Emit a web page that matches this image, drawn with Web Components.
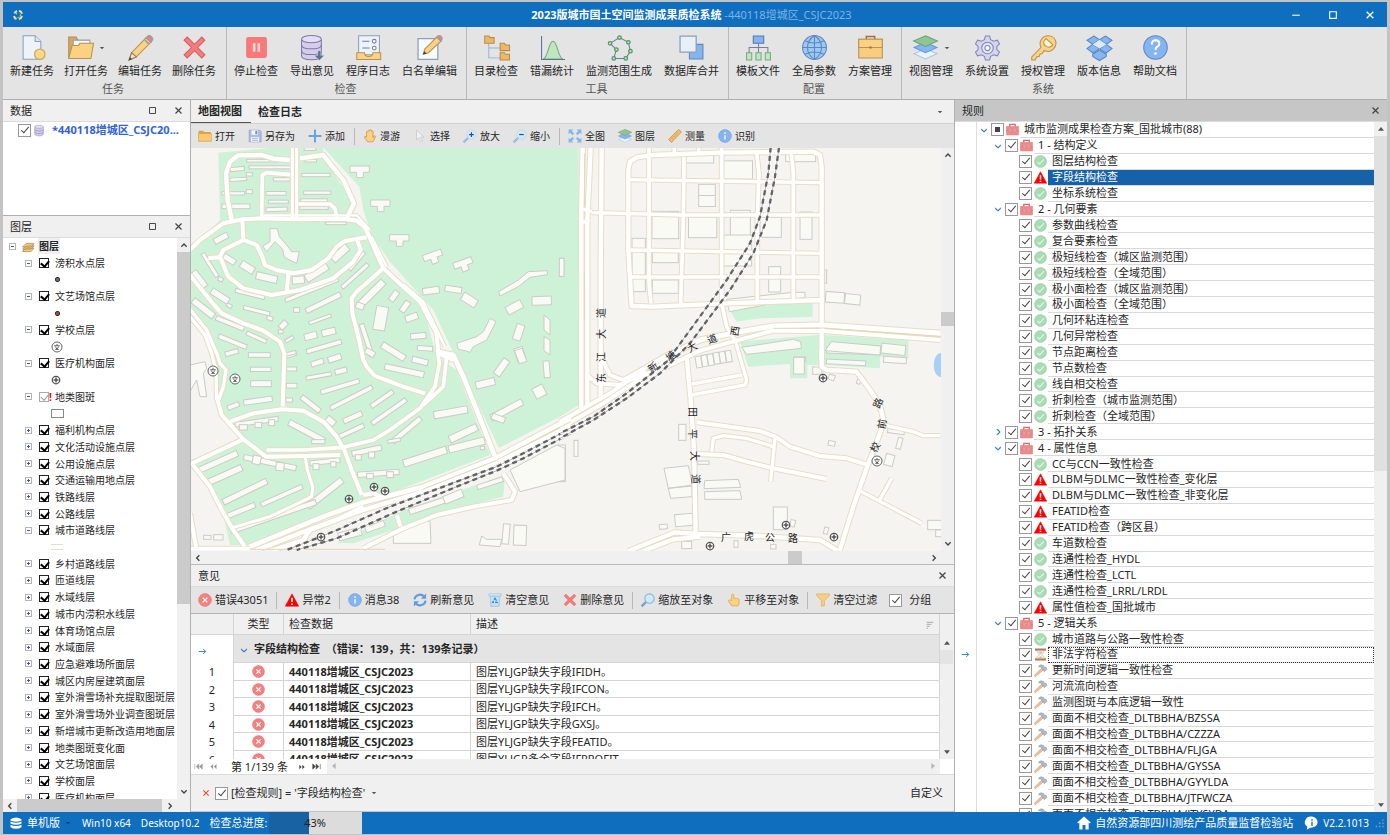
<!DOCTYPE html>
<html lang="zh-CN">
<head>
<meta charset="utf-8">
<title>2023版城市国土空间监测成果质检系统</title>
<style>
html,body{height:100%}
body{margin:0;box-sizing:border-box;padding:2px 3px 1px;background:#c3c3c3;overflow:hidden;
font:11px/16px "Noto Sans","Noto Sans CJK SC",sans-serif;color:#262626}
</style>
</head>
<body>
<app-window></app-window>
<script>
const ICONS={
logo:`<g fill="none" stroke="#f3e08a" stroke-width="4"><path d="M5 9a8 8 0 0 1 5-5M14 3.500a8.500 8.500 0 0 1 6 6M20 14a8 8 0 0 1-6 6M9 20a8 8 0 0 1-5-6"/></g><path d="M7 7l4 1-2 4zM16 9l3 4-4 3zM10 17l3-2 1 4z" fill="#8fd0a0"/>`,
newdoc:`<path d="M3 .7h11.500l5.500 5.500v17H3z" fill="#edf3f8" stroke="#8ba0ba"/><path d="M14.500.7v5.500H20" fill="#dbe6ef" stroke="#8ba0ba"/><circle cx="19" cy="18.500" r="5" fill="#fbd98a" stroke="#d0a95c" stroke-width="1.300"/>`,
folder:`<path d="M.7 22V2h7l2 3h11v4" fill="#d6a860" stroke="#b28c4e"/><path d="M5 5h16v6H5z" fill="#f5f9fc" stroke="#8ba0ba"/><path d="M.7 22.500L4 10h6l1.500-2H24.500L22 22.500z" fill="#fbd183" stroke="#b8924f"/>`,
pencil:`<path d="M1 24l2.500-7L17.500 2.500l4.500 4.500L8 21z" fill="#fbd183" stroke="#b8924f"/><path d="M17.500 2.500L19 1q1.500-1.500 3.500.5t1 3.500L22 7z" fill="#f47c7c" stroke="#8ba0ba"/><path d="M16 4.500l4 4" stroke="#8ba0ba" stroke-width="1.500"/><path d="M1 24l2.500-7 4.500 4z" fill="#f7e3c2" stroke="#8d7a5a"/><path d="M.8 24.200l1-3 2 2z" fill="#444"/>`,
cross:`<path d="M2 5l3-3 7 7 7-7 3 3-7 7 7 7-3 3-7-7-7 7-3-3 7-7z" fill="#f47c7c" stroke="#d75f5f"/>`,
pause:`<rect x="2" y="2" width="20" height="20" rx="2" fill="#f97878"/><path d="M8.500 8h2.500v8H8.500zM13 8h2.500v8H13z" fill="#ffd9d9"/>`,
dbdown:`<path d="M1.500 4v16c0 5 19 5 19 0V4" fill="#d6cdec" stroke="#7d7aa4"/><ellipse cx="11" cy="4" rx="9.500" ry="3.500" fill="#e4def4" stroke="#7d7aa4"/><path d="M1.500 9.500c0 5 19 5 19 0M1.500 15c0 5 19 5 19 0" fill="none" stroke="#7d7aa4"/><path d="M17 15h3v4.500h3.500l-5 5-5-5H17z" fill="#5b7396" stroke="#e3e3e3" stroke-width=".5"/>`,
db:`<path d="M1.500 4v16c0 5 19 5 19 0V4" fill="#d6cdec" stroke="#8d8ab4"/><ellipse cx="11" cy="4" rx="9.500" ry="3.500" fill="#e4def4" stroke="#8d8ab4"/><path d="M1.500 9.500c0 5 19 5 19 0M1.500 15c0 5 19 5 19 0" fill="none" stroke="#8d8ab4" stroke-width="1.500"/>`,
log:`<path d="M2.500.7h20V19h-20z" fill="#edf3f8" stroke="#8ba0ba"/><path d="M6 6h7M6 12.500h7" stroke="#6a80b0"/><circle cx="17.500" cy="6" r="1.800" fill="#fff" stroke="#7d7aa4"/><circle cx="17.500" cy="12.500" r="1.800" fill="#fff" stroke="#7d7aa4"/><path d="M.7 17h7.500q0 3.500 4 3.500t4-3.500h7.500v6.500H.7z" fill="#fbd183" stroke="#b8924f"/>`,
listedit:`<path d="M1 3.500h19v20H1z" fill="#f8fbfd" stroke="#8ba0ba" stroke-width="1.200"/><path d="M6 18.500l1.500-5L19 2l4 4-12 11z" fill="#fbd183" stroke="#b8924f"/><path d="M19 2l1.200-1.200q1.500-1 3 .5t.8 3L23 6z" fill="#f47c7c" stroke="#8ba0ba"/><path d="M5.800 18.800l1-3.300 2.500 2.300z" fill="#444"/>`,
tree:`<path d="M4.500 8v14h13M4.500 12.500h13" fill="none" stroke="#a9c3dd" stroke-width="1.300"/><g fill="#f0b866" stroke="#b28c4e"><path d="M.7 8V1h4l1 1.500h4V8z"/><path d="M15.500 15V8h4l1 1.500h4V15z"/><path d="M15.500 24v-7h4l1 1.500h4V24z"/></g>`,
curve:`<path d="M3 23c5-1 5-17 9.500-17s4.500 16 9.500 17z" fill="#bfe6bf" stroke="#74ac7c"/><path d="M1.500 1v22.500H24" fill="none" stroke="#5d7296"/>`,
poly:`<path d="M3 8l9-5.500 8.500 4.500 2 8.500-4.500 7H6.500L9 14z" fill="none" stroke="#6a7a9a"/><g fill="#bfe6bf" stroke="#4c9a62" stroke-width="1.200"><circle cx="3" cy="8" r="1.700"/><circle cx="12" cy="2.500" r="1.700"/><circle cx="20.500" cy="7" r="1.700"/><circle cx="22.500" cy="15.500" r="1.700"/><circle cx="18" cy="22.500" r="1.700"/><circle cx="6.500" cy="22.500" r="1.700"/><circle cx="9" cy="14" r="1.700"/></g>`,
merge:`<path d="M10 9h13v14H10z" fill="#86b4ee" stroke="#5d87bd"/><path d="M1 1h15.500v15.500H1z" fill="#e7f0f8" stroke="#8ba0ba" stroke-width="1.200"/>`,
org:`<path d="M12 8v4M3 17v-5h18v5M12 12v5" fill="none" stroke="#7d7aa4"/><path d="M7 1h10v7H7z" fill="#86b4ee" stroke="#4c7ab8"/><g fill="#bfe6bf" stroke="#74ac7c"><path d="M.5 17h5v7h-5zM9.500 17h5v7h-5zM18.500 17h5v7h-5z"/></g>`,
globe:`<circle cx="12" cy="12" r="11.500" fill="#9cc8f6" stroke="#5d87bd"/><path d="M12 .5v23M.5 12h23M3 5.500c5 3 13 3 18 0M3 18.500c5-3 13-3 18 0M12 .5c-9 6-9 17 0 23M12 .5c9 6 9 17 0 23" fill="none" stroke="#5d87bd"/>`,
brief:`<path d="M8 4V1.500h8V4" fill="none" stroke="#9b6f4a" stroke-width="1.500"/><path d="M.7 4h22.600v18H.7z" fill="#f9cd80" stroke="#b8924f"/><path d="M.7 4h22.600v8H.7z" fill="#fbd183" stroke="#b8924f"/><path d="M11 11h2v2h-2z" fill="#9b6f4a"/>`,
layers:`<path d="M12 13l11 5-11 5-11-5z" fill="#e9f3fb" stroke="#a9c6e4"/><path d="M12 7l11 5-11 5-11-5z" fill="#84b6f2" stroke="#6698d6"/><path d="M12 .7l11.500 5L12 11 .5 5.700z" fill="#8fc493" stroke="#6fa375"/>`,
gear:`<path d="M10 1h4l1 3.500 3 1.500 3.500-1 2 3.500-2.500 2.500v3l2.500 2.500-2 3.500-3.500-1-3 1.500-1 3.500h-4l-1-3.500-3-1.500-3.500 1-2-3.500L3 14v-3L.5 8.500l2-3.500L6 6l3-1.500z" fill="#d9d2ee" stroke="#7d86b4"/><circle cx="12" cy="12.500" r="5.500" fill="#e8e6f4" stroke="#7d86b4"/><circle cx="12" cy="12.500" r="2.500" fill="#fff" stroke="#7d86b4"/>`,
key:`<path d="M.7 24v-3L9.500 12C7 6 11 .7 16.500.7s7.500 4 7.500 7.500-4 8-8.500 7.500L12.500 15l-2 3-2 .5-.5 2-2.500.5L4 24z" fill="#fbd183" stroke="#b8924f"/><path d="M14.500 3.500l6.500 6q-3 4-7 1t.5-7z" fill="#fff3d8" stroke="#b8924f"/>`,
box:`<g fill="#84b6f2" stroke="#5d87bd"><path d="M6.500 1l5.500 3.500L5.500 9 0 5z"/><path d="M17.500 1L24 5l-5.500 4L12 4.500z"/><path d="M5.500 9l6.500 4-6 4.500L0 13z"/><path d="M18.500 9l5.500 4-6 4.500-6-4.500z"/><path d="M5.500 18.500l6.500-4 6.500 4v2L12 24.500l-6.500-4z"/></g><path d="M12 4.500L18.500 9 12 13 5.500 9z" fill="#dceafa"/>`,
help:`<circle cx="12" cy="12" r="11.300" fill="#84b4f2" stroke="#5d87bd"/><path d="M8.500 9q0-4 3.700-4 3.500.2 3.500 3.300 0 2-2.200 3.200-1.500.8-1.500 3" fill="none" stroke="#fff" stroke-width="1.900"/><circle cx="12" cy="17.800" r="1.300" fill="#fff"/>`,
sfolder:`<path d="M1 3h8l1 2h12v16H1z" fill="#d8a14c"/><path d="M1 8h22v13H1z" fill="#fbca6f" stroke="#d8a14c"/>`,
save:`<path d="M2 2h18l2.500 2.500V22H2z" fill="#aebfe0" stroke="#8095c0"/><path d="M6 2h11v8H6zM5 14h14v8H5z" fill="#eef5fb"/><path d="M13 3.500h2.500v5H13zM7 16.500h10M7 19.500h10" fill="#8095c0" stroke="#8095c0"/>`,
plus:`<path d="M12 1v22M1 12h22" stroke="#6ba3dc" stroke-width="3.400"/>`,
hand:`<path d="M6 14V5q1-2 2.500 0V3q1-2 2.700 0V2q1.500-2 3 0v2q1.500-2 3 0v11l2-3q2-1 2.500 1L17 22H8L2 14q1-2.500 4 0z" fill="#fbd183" stroke="#c8923f" stroke-width="1.300"/>`,
hand1:`<path d="M8 13V3q1.800-3 3.700 0v6q4-.5 9 1.500v7L19 22H8L2 13q2-2.500 6 0z" fill="#fbd183" stroke="#dba551" stroke-width="1.300"/>`,
cursor:`<path d="M6 2v17l4-4 3.500 7 3-1.500L13 14h6z" fill="#f1f1f4" stroke="#c3c3cc" stroke-width="1.200"/>`,
zin:`<path d="M1 23l8-8" stroke="#9bbbe0" stroke-width="4"/><circle cx="14.500" cy="9.500" r="8" fill="#cfeafa" stroke="#b0d4ec"/><path d="M14.500 5.500v8M10.500 9.500h8" stroke="#2d4f80" stroke-width="2"/>`,
zout:`<path d="M1 23l8-8" stroke="#9bbbe0" stroke-width="4"/><circle cx="14.500" cy="9.500" r="8" fill="#cfeafa" stroke="#b0d4ec"/><path d="M10.500 9.500h8" stroke="#2d4f80" stroke-width="2"/>`,
lens:`<path d="M1 23l8-8" stroke="#7b9ccc" stroke-width="4"/><circle cx="14.500" cy="9.500" r="8" fill="#cfeafa" stroke="#87b4dc" stroke-width="1.800"/>`,
full:`<path d="M1 1h8L6.500 3.500l4 4-3 3-4-4L1 9zM23 1v8l-2.500-2.500-4 4-3-3 4-4L15 1zM1 23v-8l2.500 2.500 4-4 3 3-4 4L9 23zM23 23h-8l2.500-2.500-4-4 3-3 4 4L23 15z" fill="#86b4ee"/>`,
ruler:`<path d="M1 18L18 1l5 4L6 23z" fill="#f4bd68" stroke="#b8924f" stroke-width="1.300"/><path d="M6 15l2 2M9 12l2 2M12 9l2 2M15 6l2 2" stroke="#b8924f" stroke-width="1.300"/>`,
info:`<circle cx="12" cy="12" r="11" fill="#84b4f2" stroke="#6c9fdc"/><path d="M12 10.500V18M12 5.500v3" stroke="#fff" stroke-width="2.200"/>`,
err:`<circle cx="12" cy="12" r="11" fill="#f58080" stroke="#e77272"/><path d="M8 8l8 8M16 8l-8 8" stroke="#fff" stroke-width="2.200"/>`,
warn:`<path d="M12 1.500L23.500 22.500H.5z" fill="#fb0000" stroke="#fb0000" stroke-linejoin="round"/><path d="M12 8v7.500M12 17.800v2.600" stroke="#fff" stroke-width="2.800"/>`,
ok:`<circle cx="12" cy="12" r="11" fill="#a8dcb2" stroke="#8ecb9b"/><path d="M6.500 12.500l4 4 7.500-8.500" fill="none" stroke="#e6f8ea" stroke-width="2"/>`,
refresh:`<path d="M2.500 11A9.500 9.500 0 0 1 19 6M21.500 13A9.500 9.500 0 0 1 5 18" fill="none" stroke="#5f9be0" stroke-width="3.600"/><path d="M22.500 1v9h-9zM1.500 23v-9h9z" fill="#5f9be0"/>`,
bin:`<path d="M3.500 5h17l-1.500 18H5z" fill="#bfe0f6" stroke="#8fb8d8"/><path d="M1.500 1.500h21V5h-21z" fill="#dbeefb" stroke="#8fb8d8"/><path d="M12 9l4 7H8z" fill="none" stroke="#3f82cc" stroke-width="2" stroke-dasharray="5 2"/>`,
funnel:`<path d="M1 1.500h22v3L14.500 13v8.500l-5 1.500V13L1 4.500z" fill="#f9cd80" stroke="#d9a651"/>`,
kit:`<path d="M7 7V2.500h10V7" fill="none" stroke="#d96a6a" stroke-width="2.500"/><path d="M1 6.500h22V22H1z" fill="#f08a8a" stroke="#e07070"/><path d="M1 14h22" stroke="#e27878"/><path d="M6 11.500h4v4H6zM14 11.500h4v4h-4z" fill="#c9a9b5"/>`,
glass:`<path d="M2 1h20v4H2zM2 19h20v4H2z" fill="#b4784e"/><path d="M5 5h14q0 5-5 7 5 2 5 7H5q0-5 5-7-5-2-5-7z" fill="#e9eff4" stroke="#b0bcc8"/><path d="M8 7h8l-4 4zM7 19l5-4 5 4z" fill="#f0b866"/>`,
hammer:`<path d="M2.500 23.500l-2-2.500L14 8l3 3z" fill="#f3c096" stroke="#c98d60"/><path d="M8 4.500q4-4.500 9-2l3 4 2-.5 2 3.500-4.500 4.500-3-2.500v-2.500L13 6z" fill="#a9bacb" stroke="#8295a8"/>`,
stack:`<path d="M2 16L9 5h13l-4 13-2 3H2z" fill="#f6cf90"/><g fill="#fbdba4" stroke="#a87b34" stroke-width="1.300"><path d="M1 21l6-6h15l-5 6zM1 17l6-6h15l-5 6zM1 13l6-6h15l-5 6z"/></g>`,
school:`<circle cx="12" cy="12" r="10" fill="#fff" stroke="#555" stroke-width="1.800"/><path d="M6.500 9.500h11M12 6v3.500M8.500 11q3.500 8 7 6M15.500 11q-3.500 8-7 6" fill="none" stroke="#555" stroke-width="1.800"/>`,
med:`<circle cx="12" cy="12" r="9" fill="#fff" stroke="#555" stroke-width="3"/><path d="M12 6v12M6 12h12" stroke="#555" stroke-width="3.600"/>`,
dbw:`<path d="M1 4.500q11-7 22 0v2.500q-11 5-22 0zM1 9q11 5 22 0v4q-11 5-22 0zM1 15.500q11 5 22 0v5q-11 6-22 0z" fill="#fff"/>`,
home:`<path d="M12 1l11.500 10-1.500 1.800-2-1.600V23h-5.500v-7.500h-5V23H4V11.200l-2 1.600L.5 11z" fill="#fff"/>`,
bubble:`<path d="M12 1a11 9.500 0 1 1-3 19L3 23.500l1-5.500A10.500 9.500 0 0 1 12 1z" fill="#fff"/><path d="M12 10v6.500M12 5.500v2.500" stroke="#106ebe" stroke-width="2.400"/>`,
arrow:`<path d="M2 12h18M14 5.500l6.500 6.500-6.500 6.500" fill="none" stroke="#2273c4" stroke-width="2.400"/>`,
open:`<path d="M4 8l8 8 8-8v4l-8 7-8-7z" fill="#2273c4" stroke="#2273c4"/>`,
shut:`<path d="M8 4l8 8-8 8h4l7-8-7-8z" fill="#2273c4" stroke="#2273c4"/>`,
x:`<path d="M4 4l16 16M20 4L4 20" stroke="currentColor" stroke-width="3.200"/>`,
max:`<path d="M4 4h16v16H4z" fill="none" stroke="currentColor" stroke-width="2.600"/>`,
min:`<path d="M3 12.500h18" stroke="currentColor" stroke-width="2.600"/>`,
caret:`<path d="M3 8h18l-9 9z" fill="currentColor"/>`,
sort:`<path d="M2 4h20M2 10h14M2 16h9M2 22h4" stroke="#999" stroke-width="2.400"/>`,
cu:`<path d="M4 17l8-8 8 8" fill="none" stroke="#444" stroke-width="4"/>`,cd:`<path d="M4 7l8 8 8-8" fill="none" stroke="#444" stroke-width="4"/>`,
cl:`<path d="M16 4l-8 8 8 8" fill="none" stroke="#444" stroke-width="4"/>`,cr:`<path d="M8 4l8 8-8 8" fill="none" stroke="#444" stroke-width="4"/>`,
tu:`<path d="M3 17h18L12 6z" fill="#555"/>`,td:`<path d="M3 7h18l-9 11z" fill="#555"/>`,
tl:`<path d="M17 3v18L6 12z" fill="#b5b5b5"/>`,tr:`<path d="M7 3v18l11-9z" fill="#b5b5b5"/>`,
first:`<path d="M2 5v14M13 5l-7 7 7 7zM22 5l-7 7 7 7z" fill="#999" stroke="#999" stroke-width="1.500"/>`,
prev:`<path d="M11 5l-7 7 7 7zM20 5l-7 7 7 7z" fill="#999"/>`,
next:`<path d="M4 5l7 7-7 7zM13 5l7 7-7 7z" fill="#444"/>`,
last:`<path d="M22 5v14M2 5l7 7-7 7zM11 5l7 7-7 7z" fill="#444" stroke="#444" stroke-width="1.500"/>`,
grip:`<path d="M18 3h3v3h-3zM18 10h3v3h-3zM18 17h3v3h-3zM11 10h3v3h-3zM11 17h3v3h-3zM4 17h3v3H4z" fill="#6ba4d8"/>`
};
const ico=(n,s)=>`<ui-icon name="${n}" style="--s:${s}px"></ui-icon>`;
const RESET=`*{box-sizing:border-box}button{font:inherit;color:inherit;background:none;border:0;padding:0;margin:0}
input[type=checkbox]{appearance:none;margin:0;width:13px;height:13px;flex:none;background:#fff;border:1px solid #999;position:relative}
input[type=checkbox]:checked::after{content:"";position:absolute;left:2px;top:2px;width:7px;height:3px;border:solid #444;border-width:0 0 1px 1px;transform:rotate(-50deg)}`;
function define(name,html,init){
  const t=document.createElement('template');
  customElements.define(name,class extends HTMLElement{
    constructor(){super();this.attachShadow({mode:'open'})}
    connectedCallback(){
      if(this.ready)return;this.ready=true;
      t.innerHTML=typeof html==='function'?html(this):html;
      this.shadowRoot.append(t.content.cloneNode(true));
      if(init)init(this);
    }
  });
}
define('ui-icon',e=>`<style>:host{display:inline-flex;flex:none;width:var(--s,14px);height:var(--s,14px)}svg{width:100%;height:100%;overflow:visible}</style>
<svg viewBox="0 0 24 24" aria-hidden="true">${ICONS[e.getAttribute('name')]||''}</svg>`);

define('scroll-bar',e=>{
  const v=e.hasAttribute('vertical'),k=e.getAttribute('kind')||'c',[a,b,c]=e.getAttribute('parts').split(' ');
  return `<style>:host{display:flex;flex-direction:${v?'column':'row'};background:#f0f0f0;flex:none;${v?'width':'height'}:13px;overflow:hidden}
  span{flex:none;width:14px;height:14px;display:flex;align-items:center;justify-content:center;${v?'width:13px':'height:13px'}}
  i{display:block;flex:1 1 0}.t{background:var(--thumb,#cbcbcb)}</style>
  <span>${ico(k+(v?'u':'l'),8)}</span><i style="flex-grow:${a}"></i><i class="t" style="flex-grow:${b}"></i><i style="flex-grow:${c}"></i><span>${ico(k+(v?'d':'r'),8)}</span>`});

define('title-bar',`<style>${RESET}:host{display:flex;height:25px;background:#106ebe;color:#fff;align-items:center;position:relative;flex:none;padding:0 12px 0 9px}
h1{margin:0;flex:1;text-align:center;font:inherit;font-weight:700;padding-left:68px}h1 span{font-weight:400;color:#7fb2e4}
nav{display:flex;gap:27px}button{display:flex}</style>
${ico('logo',12)}<h1>2023版城市国土空间监测成果质检系统 <span>-440118增城区_CSJC2023</span></h1>
<nav><button aria-label="最小化">${ico('min',10)}</button><button aria-label="最大化">${ico('max',10)}</button><button aria-label="关闭">${ico('x',10)}</button></nav>`);

define('ribbon-button',e=>`<style>${RESET}:host{display:block}button{display:flex;flex-direction:column;align-items:center;padding:8px var(--pad,6px) 0;white-space:nowrap;gap:3px}
b{display:flex;align-items:center;gap:6px;color:#555}</style>
<button><b>${ico(e.getAttribute('icon'),25)}${e.hasAttribute('menu')?ico('caret',6):''}</b><span><slot></slot></span></button>`);
define('ribbon-group',e=>`<style>:host{display:flex;flex-direction:column;border-right:1px solid #b9b9b9;padding:0 3px 0 1px}
:host([compact]){--pad:5px;padding:0 5px 0 2px}
div{display:flex;height:52px}p{margin:0;text-align:center;line-height:20px;color:#555}</style><div><slot></slot></div><p>${e.getAttribute('label')}</p>`);
const RIB=[['任务',1,['newdoc 新建任务','folder 打开任务 menu','pencil 编辑任务','cross 删除任务']],
['检查',0,['pause 停止检查','dbdown 导出意见','log 程序日志','listedit 白名单编辑']],
['工具',0,['tree 目录检查','curve 错漏统计','poly 监测范围生成','merge 数据库合并']],
['配置',0,['org 模板文件','globe 全局参数','brief 方案管理']],
['系统',0,['layers 视图管理 menu','gear 系统设置','key 授权管理','box 版本信息','help 帮助文档']]];
define('ribbon-bar',`<style>:host{display:flex;height:73px;flex:none;box-sizing:border-box;background:#e4e4e4;border-bottom:1px solid #aeaeae}</style>
${RIB.map(([l,c,b])=>`<ribbon-group label="${l}" ${c?'compact':''}>${b.map(s=>{const[i,t,m]=s.split(' ');return`<ribbon-button icon="${i}" ${m||''}>${t}</ribbon-button>`}).join('')}</ribbon-group>`).join('')}`);

define('dock-panel',e=>`<style>${RESET}:host{display:flex;flex-direction:column;min-height:0;background:#fff;overflow:hidden}
header{display:flex;align-items:center;height:22px;flex:none;background:var(--head,#f0f0f0);padding:0 7px;border-bottom:1px solid #dcdcdc}
h2{font:inherit;margin:0;flex:1}button{display:flex;color:#444;margin-left:17px}section{flex:1;min-height:0;display:flex;flex-direction:column;overflow:hidden}</style>
<header><h2>${e.getAttribute('heading')}</h2>${e.hasAttribute('pin')?`<button aria-label="还原">${ico('max',9)}</button>`:''}<button aria-label="关闭">${ico('x',9)}</button></header><section><slot></slot></section>`);

define('data-list',`<style>${RESET}:host{display:block}label{display:flex;align-items:center;height:16px;padding-left:15px;font-weight:700;color:#2f62d8;gap:1px;white-space:nowrap}
ui-icon{margin:0 6px 0 2px}span{overflow:hidden;text-overflow:ellipsis}</style><label><input type="checkbox" checked>${ico('db',11)}<span>*440118增城区_CSJC20...</span></label>`);

const LAYERS=['r图层','-滂积水点层','sdot','-文艺场馆点层','sdot2','-学校点层','sschool','-医疗机构面层','smed','!地类图斑','srect','+福利机构点层','+文化活动设施点层','+公用设施点层','+交通运输用地点层','+铁路线层','+公路线层','-城市道路线层','sline','+乡村道路线层','+匝道线层','+水域线层','+城市内涝积水线层','+体育场馆点层','+水域面层','+应急避难场所面层','+城区内房屋建筑面层','+室外滑雪场补充提取图斑层','+室外滑雪场外业调查图斑层','+新增城市更新改造用地面层','+地类图斑变化面','+文艺场馆面层','+学校面层','+医疗机构面层'];
const SYM={dot:'<u></u>',dot2:'<u style="background:#a0522d"></u>',school:ico('school',12),med:ico('med',10),rect:'<q></q>',line:'<s></s>'};
define('layer-tree',`<style>${RESET}:host{display:flex;flex-direction:column;flex:1;min-height:0;font-size:10px}
.m{flex:1;display:flex;min-height:0;overflow:hidden}.h{display:flex;background:#f0f0f0}.h scroll-bar{flex:1;margin-right:13px}
ul{flex:1;min-width:0;margin:0;padding:0;list-style:none;display:grid;grid-auto-rows:1fr;height:568px;overflow:hidden}
li{display:flex;align-items:center;min-height:0;white-space:nowrap;padding-left:22px}li.r{padding-left:6px}li.s{padding-left:48px}
label{display:flex;align-items:center;line-height:16px}
.e{width:7px;height:7px;border:1px solid #b4b4b4;position:relative;flex:none;margin-right:7px}
.e::before,.p::after{content:"";position:absolute;background:#3c5a9c;left:1px;right:1px;top:2px;height:1px}.p::after{left:2px;right:2px;top:1px;bottom:1px;height:auto}
input[type=checkbox]{width:10px;height:10px;border-color:#222;margin-right:6px}input[type=checkbox]:checked::after{left:1px;top:1px;width:6px;height:4px;border-color:#000;border-width:0 0 2px 2px}
.d input[type=checkbox]{border-color:#aaa;margin-right:0}.d input[type=checkbox]:checked::after{border-color:#999;border-width:0 0 1px 1px}.d em{color:#e00;font:700 10px/16px "Noto Sans";width:6px}
u{width:5px;height:5px;border:1px solid #333;border-radius:2px;background:#687068;margin-left:4px}q{width:13px;height:9px;border:1px solid #888;quotes:none}q::before,q::after{content:none}s{width:12px;height:6px;border:solid #e6dfc8;border-width:1px 0}
.r b{background:#efefef;padding:0 1px;margin-left:3px}.r .e{margin-right:6px}.i{width:14px;display:flex;align-items:center}</style>
<div class="m"><ul>${LAYERS.map(r=>{const k=r[0],t=r.slice(1);
 if(k==='r')return`<li class="r"><span class="e"></span>${ico('stack',13)}<b>${t}</b></li>`;
 if(k==='s')return`<li class="s"><span class="i">${SYM[t]}</span></li>`;
 return`<li class="${k==='!'?'d':''}"><span class="e ${k==='+'?'p':''}"></span><label><input type="checkbox" checked>${k==='!'?'<em>!</em>':''}${t}</label></li>`}).join('')}</ul>
<scroll-bar vertical parts="0 351 181"></scroll-bar></div><div class="h"><scroll-bar parts="0 144 1"></scroll-bar></div>`);

define('tool-button',e=>`<style>${RESET}:host{display:block}button{display:flex;align-items:center;gap:3px;padding:0 var(--pr,7px) 0 var(--pl,6px);height:100%;white-space:nowrap}</style>
<button>${ico(e.getAttribute('icon'),14)}<slot></slot></button>`);
const tools=(list,m)=>list.map(s=>{if(s==='|')return`<hr style="margin:0 ${m}px">`;const[i,t]=s.split(' ');return`<tool-button icon="${i}">${t}</tool-button>`}).join('');
const HR='hr{width:1px;height:17px;border:0;background:#b8b8b8;flex:none}';

/* Map geometry. Four tiles share one drawing space of 3 units per screen pixel. */
const TILE={A:[570,420],B:[570,1050],C:[1680,420],D:[1680,1050]};
const ROADS=[
['A',9,'M307 22V232M320 22V232'],
['A',12,'M0 330L30 300L100 250L160 238L215 235L310 238L460 236L500 242L525 262L538 290L580 385L640 440L690 485L740 580L745 640L790 660'],
['A',7,'M220 226L500 226L540 270M545 290L590 380M640 432L700 485L765 620'],
['A',13,'M125 240L113 180L108 100L120 65L145 46L215 45L250 56L300 60M330 55L400 45L415 65L460 120L492 190L470 235'],
['A',11,'M215 235L217 105L230 98L300 104M325 192H420L435 205L440 230'],
['A',12,'M157 240L160 300L200 315L215 345L225 375L260 390L310 400L365 390L415 355L440 320L465 303L530 292M160 300L100 330L90 350L115 410L160 445L245 465L330 450L430 415L490 365L512 330L500 295M55 354L92 352M296 395L290 455'],
['A',12,'M580 385L500 455L485 475L487 520L505 590L520 660L530 680L555 708L640 740L705 760'],
['A',12,'M0 405L60 480L95 520L160 550L220 572L270 605L283 640L278 800'],
['A',10,'M0 508L50 570L80 640L90 670L108 690L100 740L86 780M0 530L45 585L65 640L78 690L80 780'],
['B',12,'M80 140L95 195L160 268L228 320L340 318L450 315M120 215L190 190L275 178L340 182L400 215L440 260L465 305L485 360L515 435'],
['B',11,'M230 300L340 300L460 292L550 270L600 240L690 175L735 110L748 40L742 0M770 20L760 110L700 165'],
['B',14,'M745 5L790 15L820 80L860 180L915 320'],
['B',9,'M345 318L352 360L368 410L365 440L320 462L240 500L120 535'],
['B',12,'M160 268L5 340L60 410L95 480L130 540L165 590M0 490L18 590M0 596H180'],
['B',14,'M1142 204L1000 280L915 325L700 410L510 460L400 500L180 590'],
['B',13,'M1142 226L1000 298L900 345L700 425L520 480L380 530L200 600M520 470L440 510L360 540L340 570L250 600'],
['B',12,'M940 370L975 425L965 450L850 470L740 495L640 535L520 595M620 495L632 530M520 435L550 430L572 440'],
['C',13,'M68 22L64 205V810M92 22L82 240V800M125 22L122 400V770'],
['C',10,'M60 205L95 214M60 250L90 240'],
['C',13,'M205 119V90L210 65L230 52L280 45L480 38L760 35L780 45L785 80V660M205 90V330L215 498L280 500L500 490L785 480'],
['C',11,'M267 22V430L273 490M372 50L370 240L362 490M485 22V490L500 560L530 610M590 40L597 100L592 240V480M693 30L700 100V480M343 22V40M416 22V40'],
['C',10,'M205 119L780 128M95 218L370 225H785M205 330L785 340M205 411H785'],
['C',15,'M270 675L420 600L540 575L640 558L790 555L1142 580'],
['C',12,'M310 685L420 632L520 604L640 572L790 573L1142 600'],
['D',12,'M128 30L150 75L190 90L240 62L340 5M80 75L110 100L180 105L260 65M0 215L150 130L200 95M0 235L130 160L340 20'],
['D',13,'M380 20L392 150L402 300L407 550'],
['D',10,'M528 -20L560 90L555 105L395 135M395 102L545 75M455 305L460 265L490 257L560 265L640 290M645 265L632 395'],
['D',12,'M410 217L520 232L600 243L650 262L690 290L780 318L860 325L925 345M410 312L490 315L560 335L640 355L800 387'],
['D',13,'M785 0V50L800 60L890 65L930 120L960 165L970 210L960 250L925 340L880 470L838 605'],
['D',10,'M970 225L1060 245L1090 257H1142M895 420L1085 520M995 385L960 448'],
['D',13,'M205 603L345 547L420 552L600 558L780 570L835 603M250 603L340 568L420 560']];
const GREEN=[['A','M85 38L262 22H1166V795L1110 830L925 925L900 945L640 1045L180 1215L120 1215L90 1080L10 975L160 900L85 800L80 700L85 640L40 590L0 520V330L90 240Z'],
['B','M640 480L945 375L940 440L760 485L640 530L490 580L440 580Z'],
['C','M505 505L758 485V530L600 535L530 545ZM540 605L775 585L778 675H742V715H690V672L565 680ZM795 585L1045 600V655L960 650V685L795 675Z']];
const RAIL=[['B','M1142 235L1000 310L920 350L800 395L600 470L430 545L290 600'],['B','M1142 250L1000 325L920 362L800 410L620 485L440 565L320 600'],
['C','M632 22L625 100L600 230L570 310L500 420L350 625L320 665L200 760L100 830L0 880'],['C','M657 22L645 110L620 240L580 340L510 450L390 610L300 700L200 775L100 840L0 895']];
const RECTS={A:'360 27 35 8,215 62 90 8,362 62 35 8,142 87 42 12 -5,178 103 18 10,145 118 50 10 -3,240 82 125 9,275 118 50 10,258 160 60 11,265 185 60 9,260 208 64 12 -2,130 160 68 10,178 155 18 12,138 199 84 14,378 105 85 10,382 158 82 10,372 181 80 9,372 204 85 8,438 250 62 8,93 295 45 18 -28,450 340 60 24 -42,118 358 40 18 32,172 382 44 22 32,230 413 64 22 13,325 420 36 22 -5,380 397 75 24 -32,60 375 82 12 58,92 418 14 12 20,28 418 58 20 52,90 468 60 20 32,40 505 78 20 38,180 462 90 12 14,118 497 16 10 30,200 512 80 12 14,240 535 18 12 20,365 450 170 12 -22,495 408 105 12 -42,500 363 70 12 -50,400 488 115 16 -26,320 510 18 14,390 538 70 10 -20,280 555 18 26 45,272 575 14 10,545 460 100 22 -45,510 498 24 18 20,612 468 34 18 -55,645 500 36 18 -55,572 535 72 36 -80,665 532 38 20 -20,685 588 46 18 -5,705 625 46 14 4,723 452 50 20 -8,790 448 50 18 8,838 480 48 26 32,120 550 90 14 22,200 592 65 12 24,128 605 90 14 22,208 645 66 14,362 588 38 20 -14,416 576 42 20 -14,402 620 108 14 -16,298 598 28 10 -30,305 645 32 10 -20,530 600 100 14 72,610 635 80 20 32,1115 382 54 13 90,973 502 50 26 -28,1055 482 58 26 -2,986 577 48 24 -72,990 642 40 26 72',
B:'212 58 62 13,213 101 62 18,204 152 86 16 -8,130 168 36 14 -22,382 38 38 16 -18,434 25 40 18 -18,386 78 76 12 -10,453 63 36 16 -14,450 110 120 14 -17,484 143 140 14 -27,576 147 80 14 -35,597 185 125 14 -35,488 202 60 16 -24,485 243 80 14 -25,362 162 70 16 38,690 33 48 18 14,643 62 120 18 12,782 187 102 22 -10,540 8 30 18 30,650 240 110 16 -40,612 272 38 10 -10,200 215 130 14 -8,160 232 24 16,205 225 20 16,245 218 18 18,350 245 120 18 28,385 275 40 12,240 338 160 16 12,200 330 24 26 12,270 350 24 24 5,85 335 125 18 -24,105 375 110 20 -24,165 425 145 18 -26,275 437 135 14 -24,152 482 92 16 -22,405 430 130 20 -38,250 500 270 16 -19,405 335 90 14 -6,378 350 18 18,430 343 16 16,530 302 90 16 -12,505 322 18 16,545 315 18 18,565 370 125 16 -4,540 378 20 16,600 374 20 18,705 320 135 22 -18,820 250 90 22 -25,830 285 110 22 -14,877 294 12 10,303 10 30 10 -15,305 57 30 12,305 107 32 14,298 150 20 12,935 52 55 22 -55,886 100 58 22 -14,992 18 42 24 70,1070 58 50 18 85,1048 125 34 34 -28,950 180 105 20 -28,925 205 40 18 20,422 213 30 20 40,85 562 28 16,52 562 22 12,948 552 20 60 5,990 556 38 60 2,480 552 70 24 -15,555 530 60 18 -20,720 465 130 18 -18,900 400 80 14 -18,790 440 60 24 -22,125 8 40 14 -15',
C:'415 52 92 34,530 90 95 55,722 52 90 26,441 150 50 34,441 183 50 33,316 255 80 82,428 262 85 62,541 253 60 84,632 262 64 60,738 257 36 82,236 375 40 160,316 350 78 36,530 310 90 50,530 355 90 46,316 440 78 40,644 418 36 76,825 472 56 32 4,878 478 46 30 6,797 410 6 40,1000 628 72 30 6,5 382 14 54,720 658 34 14',
D:'858 37 118 14 3,717 47 32 50,1005 30 68 18 4,880 3 160 18 2,815 82 18 16 20,772 62 28 22,896 95 10 14 20,367 247 22 48,48 295 12 48,5 340 22 110,430 338 34 10,372 510 54 36 -5,310 530 24 14 -5,661 505 42 68,698 520 14 20 15,798 542 12 20 15,815 280 20 14 10,988 330 26 34 15,1018 280 14 34 15,1008 245 50 12 8,1125 525 44 28,1137 550 20 20,380 585 30 22,528 582 12 20,640 590 16 14,416 36 17 34 -9,434 32 17 34 -9,452 29 17 34 -9,470 25 17 34 -9,488 22 17 34 -9,506 19 17 34 -9'};
const SHAPES=[['A','M240 266H262L268 290L290 315L305 335H328L320 370L283 352L278 328L255 305L230 335L218 318L240 305Z'],
['A','M926 455L985 420L1015 395L1072 392V404L1020 412L985 440L930 468ZM900 535L918 545L890 600L850 620L840 637L825 632L805 628L800 610L860 590L880 575ZM1062 525L1080 540V585L1062 570ZM1062 590L1080 600V645L1062 632Z'],
['B','M960 360L1100 285L1125 295V390L990 425ZM610 540L720 512L723 580H610ZM0 45L45 35L50 55L40 70L50 140H30L20 90L0 125ZM868 585L875 558L890 568H935L930 590Z'],
['C','M508 515L525 512L735 472V457H700L500 478ZM545 622L700 598L722 605L724 625L560 643ZM795 632L815 605L962 618L960 645Z'],
['D','M312 355L385 347L398 405L325 415ZM325 415L396 408V440L332 445ZM434 392L535 388L542 412L432 416ZM434 425L540 422L545 448H434Z']];
const TEES=[[509,95,0],[571,197,0],[628,301,0],[730,353,-20],[821,376,-20]];
const NAMES=[['道',601,313,-90],['大',601,334,-90],['江',601,357,-90],['东',601,378,-90],['新',653,367,-38],['塘',671,356,-38],['大',692,347,-30],['道',712,339,-22],['西',735,331,-80],['田',693,412,90],['平',693,434,90],['大',695,456,90],['道',696,479,90],['路',878,403,-68],['前',882,424,-80],['校',875,447,-60],['广',726,537,0],['虎',749,536,0],['公',770,537,0],['路',793,538,0]];
const MARKS=[['school',213,371],['school',235,379],['school',877,461],['med',374,487],['med',385,491],['med',349,499],['med',321,537],['med',823,378],['med',786,525],['med',834,537],['med',710,546]];
const tr=t=>`transform="translate(${TILE[t]})"`;
const path=([t,d],c)=>`<path class="${c}" ${tr(t)} d="${d}"/>`;
define('map-canvas',()=>`<style>:host{display:block;flex:1;min-width:0;overflow:hidden;background:#f5f4f0}svg{display:block;width:100%;height:100%}
.g{fill:#cef2d8}.n{fill:#f5f4f0}.b{fill:#fafaf5;stroke:#cbcbc8;stroke-width:3}.c,.w,.o{fill:none;stroke-linejoin:round}.c{stroke:#e5dec6}.w{stroke:#fff}
.u{fill:none;stroke:#fff;stroke-width:9}.k{fill:none;stroke:#888;stroke-width:2}.d{fill:none;stroke:#636363;stroke-width:7;stroke-dasharray:15 11}.o{stroke:#e6d6b4;stroke-width:3}
text{font:30px "Noto Sans CJK SC",sans-serif;fill:#222;text-anchor:middle}</style>
<svg viewBox="573 444 2250 1209" preserveAspectRatio="xMinYMin slice" role="img" aria-label="地图">
${GREEN.map(g=>path(g,'g')).join('')}
${path(['A','M400 22L508 140L520 210L545 285L600 365L730 510L800 660L930 930L900 945L800 690L740 650L700 500L590 400L530 290L490 230V190L400 50Z'],'n')}
<ellipse cx="2823" cy="1095" rx="22" ry="36" fill="#a8d0f4"/>
${Object.entries(RECTS).map(([t,s])=>`<g ${tr(t)}>${s.split(',').map(r=>{const[x,y,w,h,a=0]=r.split(' ').map(Number);return`<rect class="b" x="${x-w/2}" y="${y-h/2}" width="${w}" height="${h}" transform="rotate(${a} ${x} ${y})"/>`}).join('')}</g>`).join('')}
${SHAPES.map(s=>path(s,'b')).join('')}
<g ${tr('A')}>${TEES.map(([x,y,a])=>`<path class="b" transform="translate(${x} ${y}) rotate(${a})" d="M-29-17H29V2H11V18H-9V2H-29Z"/>`).join('')}</g>
${ROADS.map(([t,w,d])=>`<path class="c" ${tr(t)} stroke-width="${w+6}" d="${d}"/>`).join('')}
${ROADS.map(([t,w,d])=>`<path class="w" ${tr(t)} stroke-width="${w}" d="${d}"/>`).join('')}
${path(['C','M74 40V200M73 400V540M640 565L790 564L1142 590'],'o')}${path(['B','M180 598H585M700 417L915 333L1142 215'],'o')}
${RAIL.map(r=>path(r,'u')+path(r,'k')+path(r,'d')).join('')}
${MARKS.map(([n,x,y])=>{const s=n==='school'?1.5:1.25;return`<g transform="translate(${x*3-12*s} ${y*3-12*s}) scale(${s})">${ICONS[n]}</g>`}).join('')}
${NAMES.map(([c,x,y,a])=>`<text transform="translate(${x*3} ${y*3}) rotate(${a})" y="11">${c}</text>`).join('')}
</svg>`);

define('map-view',`<style>${RESET}${HR}:host{display:flex;flex-direction:column;flex:1;min-height:0}
nav{display:flex;height:24px;background:#f0f0f0;align-items:stretch;font-weight:700;flex:none;border-bottom:1px solid #d2d2d2}
nav button{padding:0 9px 0 7px}nav button.on{border-bottom:1px solid #555}.m{margin-left:auto;padding:0 11px;display:flex;align-items:center;color:#555}
.t{display:flex;height:24px;flex:none;background:#e4e4e4;font-size:10px;align-items:center;padding-left:1px}
.v{display:flex;flex:1;min-height:0}.h{display:flex;background:#f0f0f0;border-bottom:1px solid #bbb;height:14px;flex:none}.h scroll-bar{flex:1;margin-right:13px}</style>
<nav><button class="on">地图视图</button><button>检查日志</button><button class="m" aria-label="菜单">${ico('caret',6)}</button></nav>
<div class="t">${tools(['sfolder 打开','save 另存为','plus 添加','|','hand 漫游','cursor 选择','zin 放大','zout 缩小','|','full 全图','layers 图层','ruler 测量','info 识别'],2)}</div>
<div class="v"><map-canvas></map-canvas><scroll-bar vertical parts="150 14 210"></scroll-bar></div>
<div class="h"><scroll-bar parts="582 14 125"></scroll-bar></div>`);

define('issue-tools',`<style>${RESET}${HR}:host{display:flex;height:26px;flex:none;background:#e4e4e4;align-items:center;border-bottom:1px solid #b4b4b4;--pl:7px;--pr:7px}label{display:flex;align-items:center;gap:7px;margin-left:5px}</style>
${tools(['err 错误43051','|','warn 异常2','|','info 消息38','refresh 刷新意见','bin 清空意见','cross 删除意见','|','lens 缩放至对象','hand1 平移至对象','|','funnel 清空过滤'],1)}<label><input type="checkbox" checked>分组</label>`);
const ISSUES=['缺失字段IFIDH','缺失字段IFCON','缺失字段IFCH','缺失字段GXSJ','缺失字段FEATID','多余字段IFPROFIT'];
define('issue-grid',`<style>${RESET}:host{display:block;flex:none}.w{display:flex;height:145px;overflow:hidden}
table{flex:1;border-collapse:separate;border-spacing:0;table-layout:fixed;width:100%;height:153px}
th,td{padding:0 0 0 5px;text-align:left;font-weight:400;border:solid #d4d4d4;border-width:0 1px 1px 0;line-height:14px;white-space:nowrap;overflow:hidden}
th{background:#f0f0f0;height:21px;position:relative}th ui-icon{position:absolute;right:5px;top:7px}
.c{text-align:center;padding:0}.n{border-width:0 1px 0 0}.g th{height:28px;background:#e4e4e4;font-weight:700;padding-left:6px}.g ui-icon{position:static;vertical-align:middle;margin-right:6px}
.r td{height:17px}.r:nth-child(even) td{height:18px}.r td:nth-child(3){font-weight:700}td ui-icon{display:block;margin:auto}td.a{padding-left:7px}.a ui-icon{margin:0}
.s{width:14px;background:#f0f0f0;display:flex;flex-direction:column;padding-top:22px}.s scroll-bar{flex:1}
.p{display:flex;height:16px;align-items:center;background:#fff;padding-left:3px;border-bottom:1px solid #dcdcdc}.p button{display:flex;margin-right:6px}.p span{margin:0 10px 0 7px;white-space:pre}.p scroll-bar{flex:1;margin-right:14px;height:15px}</style>
<div class="w"><table><colgroup><col style="width:43px"><col style="width:50px"><col style="width:187px"><col></colgroup>
<thead><tr><th></th><th class="c">类型</th><th>检查数据</th><th>描述${ico('sort',8)}</th></tr></thead>
<tbody><tr class="g"><td class="n a">${ico('arrow',9)}</td><th colspan="3">${ico('open',8)}字段结构检查&nbsp; （错误：139，共：139条记录）</th></tr>
${ISSUES.map((t,i)=>`<tr class="r"><td class="n c">${i+1}</td><td class="c">${ico('err',13)}</td><td>440118增城区_CSJC2023</td><td>图层YLJGP${t}。</td></tr>`).join('')}</tbody></table>
<div class="s"><scroll-bar vertical kind="t" parts="0 14 82" style="--thumb:#e4e4e4"></scroll-bar></div></div>
<div class="p"><button aria-label="第一条">${ico('first',9)}</button><button aria-label="上一条">${ico('prev',9)}</button><span>第 1/139 条</span><button aria-label="下一条">${ico('next',8)}</button><button aria-label="最后一条">${ico('last',9)}</button><scroll-bar kind="t" parts="1 0 1"></scroll-bar></div>`);
define('filter-bar',`<style>${RESET}:host{display:flex;height:36px;background:#f0f0f0;align-items:center;padding:0 11px;flex:none;border-bottom:1px solid #c4c4c4}
button{display:flex}.x{color:#d9502e;margin-right:5px}label{display:flex;align-items:center;gap:3px;margin-right:6px}.c{margin-left:auto}.k{color:#555}</style>
<button class="x" aria-label="清除">${ico('x',8)}</button><label><input type="checkbox" checked>[检查规则] = '字段结构检查'</label><button class="k" aria-label="展开">${ico('caret',6)}</button><button class="c">自定义</button>`);

const RULES=['0 kit 城市监测成果检查方案_国批城市(88)','1 kit 1 - 结构定义','2 ok 图层结构检查','2 warn 字段结构检查','2 ok 坐标系统检查','1 kit 2 - 几何要素','2 ok 参数曲线检查','2 ok 复合要素检查','2 ok 极短线检查（城区监测范围）','2 ok 极短线检查（全域范围）','2 ok 极小面检查（城区监测范围）','2 ok 极小面检查（全域范围）','2 ok 几何环粘连检查','2 ok 几何异常检查','2 ok 节点距离检查','2 ok 节点数检查','2 ok 线自相交检查','2 ok 折刺检查（城市监测范围）','2 ok 折刺检查（全域范围）','1 kit 3 - 拓扑关系','1 kit 4 - 属性信息','2 ok CC与CCN一致性检查','2 warn DLBM与DLMC一致性检查_变化层','2 warn DLBM与DLMC一致性检查_非变化层','2 warn FEATID检查','2 warn FEATID检查（跨区县）','2 ok 车道数检查','2 ok 连通性检查_HYDL','2 ok 连通性检查_LCTL','2 ok 连通性检查_LRRL/LRDL','2 warn 属性值检查_国批城市','1 kit 5 - 逻辑关系','2 ok 城市道路与公路一致性检查','2 glass 非法字符检查','2 hammer 更新时间逻辑一致性检查','2 hammer 河流流向检查','2 hammer 监测图斑与本底逻辑一致性',...['BZSSA','CZZZA','FLJGA','GYSSA','GYYLDA','JTFWCZA','JTYSYDA'].map(s=>'2 hammer 面面不相交检查_DLTBBHA/'+s)];
define('rule-tree',`<style>${RESET}:host{display:flex;flex:1;min-height:0;overflow:hidden}
ul{flex:1;margin:0;padding:0;list-style:none;display:grid;grid-template-columns:100%;grid-auto-rows:1fr;height:700px;background:linear-gradient(#dcdcdc,#dcdcdc) 21px 0/1px 100% no-repeat}
li{display:grid;grid-template-columns:21px 1fr;min-height:0}
.a{display:flex;align-items:center;padding-left:6px}
div{display:flex;min-width:0;align-items:center}.l0{padding-left:4px}.l1{padding-left:18px}.l2{padding-left:43px}
div>ui-icon:first-child{margin-right:3px}label{display:flex;flex:1;align-items:center;height:100%}label ui-icon{margin:0 1px 0 2px}
label span{flex:1;align-self:stretch;display:flex;align-items:center;border-bottom:1px solid #d9d9d9;padding-left:4px;line-height:14px;white-space:nowrap}
.sel{background:#1562a8;color:#fff}.foc{outline:1px dotted #333;outline-offset:-1px}
input.mix::after{content:"";position:absolute;left:3px;top:3px;width:5px;height:5px;background:#444}</style>
<ul>${RULES.map((r,i)=>{const[,l,ic,t]=r.match(/^(\d) (\w+) (.*)$/);
return`<li><span class="a">${i===33?ico('arrow',9):''}</span><div class="l${l}">${l<2?ico(i===19?'shut':'open',8):''}<label><input type="checkbox" ${i?'checked':'class="mix"'}>${ico(ic,13)}<span class="${i===3?'sel':i===33?'foc':''}">${t}</span></label></div></li>`}).join('')}</ul>
<scroll-bar vertical kind="t" parts="0 334 327" style="--thumb:#e0e0e0"></scroll-bar>`);

define('status-bar',`<style>${RESET}:host{display:flex;height:22px;flex:none;background:#106ebe;color:#fff;align-items:center;padding:0 2px 0 7px;white-space:nowrap}
.d{display:flex;align-items:center;gap:5px;margin-right:11px}.d i{color:#0a3a68;display:flex}span{margin-right:10px}.s{font-size:10px}
.p{width:93px;height:22px;background:linear-gradient(#1862a4,#1862a4) 0/43% 100% no-repeat #dcdcdc;display:flex;align-items:center;justify-content:center;color:#222}.p b{font-weight:400}
.r{margin-left:auto}a,.v{display:flex;align-items:center;gap:4px;color:#fff;text-decoration:none;margin-right:12px}.v{margin-right:5px}.q{margin-right:1px}</style>
<button class="d">${ico('dbw',12)}单机版<i>${ico('caret',6)}</i></button><span class="s">Win10 x64</span><span class="s">Desktop10.2</span><span class="q">检查总进度:</span>
<div class="p" role="progressbar" aria-valuenow="43" aria-label="检查总进度"><b>43%</b></div>
<a class="r" href="#">${ico('home',14)}自然资源部四川测绘产品质量监督检验站</a><div class="v s">${ico('bubble',14)}V2.2.1013</div>${ico('grip',11)}`);

define('app-window',`<style>:host{display:flex;flex-direction:column;height:100%;background:#fff}
main{flex:1;min-height:0;display:grid;grid-template-columns:187px minmax(0,1fr) 432px;grid-template-rows:minmax(0,1fr);gap:1px;background:#b0b0b0}
.l,.c{display:flex;flex-direction:column;min-height:0;min-width:0}.l{gap:1px}.l dock-panel:first-child{flex:0 0 115px}.l dock-panel+dock-panel{flex:1}
.c dock-panel{flex:none}.r{--head:#c6c6c6}</style>
<title-bar></title-bar><ribbon-bar></ribbon-bar>
<main><div class="l"><dock-panel heading="数据" pin><data-list></data-list></dock-panel><dock-panel heading="图层" pin><layer-tree></layer-tree></dock-panel></div>
<div class="c"><map-view></map-view><dock-panel heading="意见"><issue-tools></issue-tools><issue-grid></issue-grid><filter-bar></filter-bar></dock-panel></div>
<dock-panel class="r" heading="规则"><rule-tree></rule-tree></dock-panel></main>
<status-bar></status-bar>`);
</script>
</body>
</html>
